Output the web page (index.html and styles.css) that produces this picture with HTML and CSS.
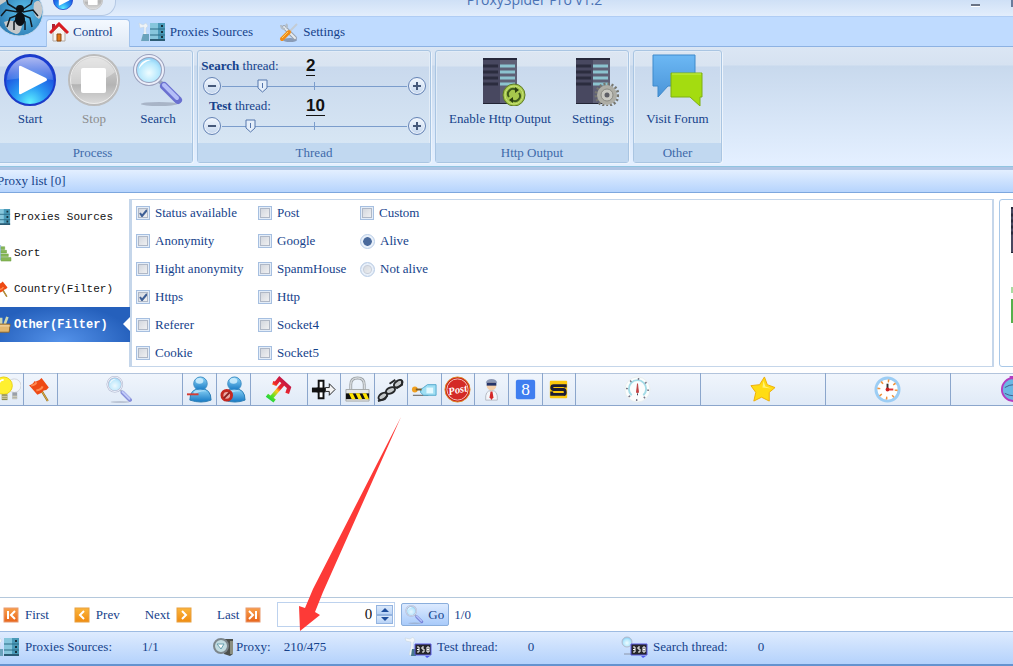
FILE: index.html
```html
<!DOCTYPE html>
<html lang="en">
<head>
    <meta charset="UTF-8">
    <meta name="viewport" content="width=device-width, initial-scale=1.0">
    <title>ProxySpider Pro v1.2</title>
    <link rel="stylesheet" href="styles.css">
</head>
<body>
    <!-- shared icons -->
    <svg class="sprite" aria-hidden="true">
        <defs>
            <radialGradient id="g-play" cx=".5" cy=".95" r=".9"><stop offset="0" stop-color="#5ff0ff"/><stop offset=".35" stop-color="#2a9cf4"/><stop offset=".75" stop-color="#1b50e0"/><stop offset="1" stop-color="#1a3cd8"/></radialGradient>
            <linearGradient id="g-shine" x1="0" y1="0" x2="0" y2="1"><stop offset="0" stop-color="#fff" stop-opacity=".65"/><stop offset="1" stop-color="#fff" stop-opacity=".15"/></linearGradient>
            <linearGradient id="g-stop" x1="0" y1="0" x2="0" y2="1"><stop offset="0" stop-color="#dcdcdc"/><stop offset=".6" stop-color="#b4b4b4"/><stop offset="1" stop-color="#dedede"/></linearGradient>
            <radialGradient id="g-lens" cx=".5" cy=".6" r=".6"><stop offset="0" stop-color="#effcff"/><stop offset=".6" stop-color="#b6e8fd"/><stop offset="1" stop-color="#7cc6f2"/></radialGradient>
            <linearGradient id="g-user" x1="0" y1="0" x2="0" y2="1"><stop offset="0" stop-color="#8fd6f8"/><stop offset="1" stop-color="#1478c4"/></linearGradient>
            <linearGradient id="g-orange" x1="0" y1="0" x2="0" y2="1"><stop offset="0" stop-color="#f9a04a"/><stop offset="1" stop-color="#e8641a"/></linearGradient>
            <linearGradient id="g-amber" x1="0" y1="0" x2="0" y2="1"><stop offset="0" stop-color="#fbb53c"/><stop offset="1" stop-color="#f08c10"/></linearGradient>
            <linearGradient id="g-rainbow" gradientUnits="userSpaceOnUse" x1="4" y1="26" x2="22" y2="6"><stop offset="0" stop-color="#10d048"/><stop offset=".25" stop-color="#5ee020"/><stop offset=".5" stop-color="#ffc820"/><stop offset=".65" stop-color="#f02828"/><stop offset="1" stop-color="#c01848"/></linearGradient>
            <linearGradient id="g-chat" x1="0" y1="0" x2="0" y2="1"><stop offset="0" stop-color="#6cb8f4"/><stop offset="1" stop-color="#4a94d8"/></linearGradient>
            <radialGradient id="g-globe" cx=".6" cy=".5" r=".6"><stop offset="0" stop-color="#5cc0ec"/><stop offset="1" stop-color="#2a78b0"/></radialGradient>
        </defs>
        <symbol id="i-play" viewBox="0 0 52 52">
            <circle cx="26" cy="26" r="25" fill="url(#g-play)" stroke="#1c3cc8" stroke-width="2"/>
            <path d="M3 26a23 23 0 0 1 46 0q-22-4-46 0z" fill="url(#g-shine)"/>
            <path d="M15 13q0-2 2-1l25 12q2 2 0 3L17 40q-2 1-2-1z" fill="#fff"/>
        </symbol>
        <symbol id="i-stop" viewBox="0 0 52 52">
            <circle cx="26" cy="26" r="25" fill="url(#g-stop)" stroke="#bcbcbc" stroke-width="2"/>
            <path d="M3 30A23 23 0 0 1 47 18Q30 32 3 30z" fill="#fff" opacity=".35"/>
            <circle cx="26" cy="26" r="23.500" fill="none" stroke="#ececec"/>
            <rect x="13" y="14" width="25" height="25" rx="2" fill="#fff"/>
        </symbol>
        <symbol id="i-search" viewBox="0 0 52 52">
            <ellipse cx="27" cy="50" rx="18" ry="2" fill="#8d97ab" opacity=".6"/>
            <path d="M27 27l6 5" stroke="#9aa4bc" stroke-width="4"/>
            <path d="M32 32L46 46" stroke="#6a70d0" stroke-width="8" stroke-linecap="round"/>
            <path d="M32 31L45 44" stroke="#b4bef8" stroke-width="4" stroke-linecap="round"/>
            <circle cx="17" cy="16" r="14" fill="url(#g-lens)" stroke="#9aa0bc" stroke-width="4"/>
            <circle cx="17" cy="16" r="14" fill="none" stroke="#eceffa" stroke-width="2"/>
            <path d="M7 15a10 10 0 0 1 12-9q-8 2-12 9z" fill="#fff"/>
        </symbol>
        <symbol id="i-server" viewBox="0 0 52 52">
            <path d="M9 4h17v46H9z" fill="#484860"/><path d="M26 4h17v46H26z" fill="#5f6076"/>
            <path d="M9 4h34v2H9z" fill="#26283a"/><path d="M9 49h34v1H9z" fill="#222434"/>
            <path d="M9 12h15M9 18h15M9 24h15M9 30h15" stroke="#2b2c3e" stroke-width="3"/>
            <path d="M26 12h15M26 18h15M26 24h15M26 30h15" stroke="#8cc3cf" stroke-width="3"/>
        </symbol>
        <symbol id="i-servers" viewBox="0 0 28 20">
            <path d="M1 1l4 2 3-2 2 3-2 2v4l3 9H3l3-9V5L2 6z" fill="#eef3f7" stroke="#c4d2dc" stroke-width=".5"/>
            <path d="M5 12h6v7H3z" fill="#6aa2bc"/>
            <path d="M12 1h15v18H12z" fill="#4a9ab8"/><path d="M12 1h8v18h-8z" fill="#86c6dc"/>
            <path d="M12 7h15M12 13h15" stroke="#2c6c86" stroke-width="1"/><path d="M12 18h15" stroke="#2c5c74" stroke-width="2"/>
            <path d="M23 4h2M23 10h2M23 15h2" stroke="#16323e" stroke-width="2"/>
        </symbol>
        <symbol id="i-house" viewBox="0 0 20 20">
            <path d="M4 10l6-6 6 6v9H4z" fill="#f8f4f0" stroke="#b5a9a0"/>
            <path d="M3 2h3v4l-3 3z" fill="#a23"/>
            <path d="M1 11l9-9 9 9" fill="none" stroke="#da1c22" stroke-width="3"/>
            <path d="M8 12h4v7H8z" fill="#e07818" stroke="#8c4a10"/>
        </symbol>
        <symbol id="i-tools" viewBox="0 0 20 20">
            <ellipse cx="11" cy="18" rx="7" ry="2" fill="#667086" opacity=".6"/>
            <path d="M5 5l11 11" stroke="#98a2b0" stroke-width="4" stroke-linecap="round"/>
            <path d="M5 5l11 11" stroke="#e8ecf0" stroke-width="2" stroke-linecap="round"/>
            <path d="M2 3q0 4 4 4M7 2q2 2 0 4" fill="none" stroke="#b4bec8" stroke-width="2"/>
            <path d="M9 11l9-9" stroke="#c4ccd4" stroke-width="2"/>
            <path d="M3 17l7-7" stroke="#f08c18" stroke-width="4" stroke-linecap="round"/><path d="M3 16l6-6" stroke="#ffd060"/>
        </symbol>
        <symbol id="i-flag" viewBox="0 0 26 26">
            <path d="M9 6l11 18" stroke="#8e681c" stroke-width="2"/><path d="M9 6l11 18" stroke="#d8ac48"/>
            <path d="M2 9q4-1 5-4 4 1 7-3l7 9q-2 3-5 3-2 3-6 4z" fill="#ee4a14"/><path d="M4 9q4 0 5-3M9 14q5-1 6-4" stroke="#ff8a50" fill="none" stroke-width="2"/>
        </symbol>
        <symbol id="i-user" viewBox="0 0 28 28">
            <path d="M4 25q0-12 11-12t11 12q-10 4-22 0z" fill="url(#g-user)" stroke="#2b7db4"/>
            <circle cx="15" cy="8" r="7" fill="url(#g-user)" stroke="#3b8dc4"/><ellipse cx="14" cy="5" rx="4" ry="3" fill="#d8f3ff" opacity=".8"/>
            <path d="M8 16q7-4 13 0-7-1-13 4z" fill="#c5ebff" opacity=".7"/>
        </symbol>
        <symbol id="i-counter" viewBox="0 0 28 22">
            <path d="M11 8h16v11H11z" fill="#26262a" stroke="#5a5ae0"/>
            <path d="M13 11h2v5h-2M13 13.500h2M20 11h-2v2h2v3h-2M23 11h2v5h-2zM23 13.500h2" fill="none" stroke="#fff"/>
            <path d="M21 20h5l-3 2z" fill="#5058f0"/>
        </symbol>
    </svg>

    <div class="app">
        <header class="titlebar">
            <div class="quick-access">
                <button class="quick" aria-label="Start"><svg><use href="#i-play"/></svg></button>
                <button class="quick" aria-label="Stop"><svg><use href="#i-stop"/></svg></button>
            </div>
            <h1>ProxySpider Pro v1.2</h1>
            <div class="window-buttons">
                <button aria-label="Minimize"><svg viewBox="0 0 10 8"><path d="M0 4h9v2H0z" fill="#6a7486"/><path d="M0 6h9v1H0z" fill="#fff"/></svg></button>
                <button aria-label="Maximize"><svg viewBox="0 0 10 8"><path d="M1 0v6h8V0" fill="none" stroke="#6a7c9c" stroke-width="2"/></svg></button>
            </div>
            <svg class="orb" viewBox="0 0 50 50">
                <circle cx="25" cy="25" r="24" fill="url(#g-globe)" stroke="#c5d9ee"/>
                <path d="M10 35q8-3 13 1 7 1 4 6-1 5-5 5Q12 44 10 35zM40 16q6-6 8 4 1 9-3 12-7-3-5-16zM4 14q8-10 14-9l-4 8-8 5z" fill="#c6c9ca"/>
                <g fill="none" stroke="#111a22" stroke-width="1.500"><path d="M24 23L14 17l-2-7M24 25l-12-2-5 6M24 28l-8 3-3 9M25 30l-5 5v8M28 23l9-6 2-7M29 25l10-2 5 6M29 28l7 3 2 9M28 30l3 5v8"/></g>
                <ellipse cx="26" cy="32" rx="5" ry="7" fill="#0b1015"/><circle cx="26" cy="22" r="4" fill="#0b1015"/>
            </svg>
        </header>

        <nav class="tabs">
            <a href="#" class="tab active"><svg class="tab-icon"><use href="#i-house"/></svg>Control</a>
            <a href="#" class="tab"><svg class="tab-icon wide"><use href="#i-servers"/></svg>Proxies Sources</a>
            <a href="#" class="tab"><svg class="tab-icon"><use href="#i-tools"/></svg>Settings</a>
        </nav>

        <div class="ribbon">
            <section class="group process">
                <div class="group-body">
                    <button class="tile"><svg><use href="#i-play"/></svg>Start</button>
                    <button class="tile" disabled><svg><use href="#i-stop"/></svg>Stop</button>
                    <button class="tile"><svg><use href="#i-search"/></svg>Search</button>
                </div>
                <h2>Process</h2>
            </section>
            <section class="group thread">
                <div class="group-body">
                    <div class="thread-head"><label for="search-thread"><b>Search</b> thread:</label><output>2</output></div>
                    <div class="slider">
                        <button aria-label="Less"><svg viewBox="0 0 16 16"><path d="M4 8h8" stroke="#46597a" stroke-width="2"/></svg></button>
                        <input type="range" id="search-thread" min="0" max="100" value="20">
                        <button aria-label="More"><svg viewBox="0 0 16 16"><path d="M4 8h8M8 4v8" stroke="#46597a" stroke-width="2"/></svg></button>
                    </div>
                    <div class="thread-head"><label for="test-thread"><b>Test</b> thread:</label><output>10</output></div>
                    <div class="slider">
                        <button aria-label="Less"><svg viewBox="0 0 16 16"><path d="M4 8h8" stroke="#46597a" stroke-width="2"/></svg></button>
                        <input type="range" id="test-thread" min="0" max="100" value="13">
                        <button aria-label="More"><svg viewBox="0 0 16 16"><path d="M4 8h8M8 4v8" stroke="#46597a" stroke-width="2"/></svg></button>
                    </div>
                </div>
                <h2>Thread</h2>
            </section>
            <section class="group output">
                <div class="group-body">
                    <button class="tile tile-wide"><svg viewBox="0 0 52 52"><use href="#i-server"/><circle cx="40" cy="41" r="11" fill="#a6c84c" stroke="#5e7a26"/><circle cx="40" cy="41" r="9" fill="none" stroke="#c8e078"/><path d="M35 43a5 5 0 0 1 7-7M45 39a5 5 0 0 1-7 7" fill="none" stroke="#3f5a1c" stroke-width="2"/><path d="M41 33l4 3-4 3zM39 49l-4-3 4-3z" fill="#2c4010"/></svg>Enable Http Output</button>
                    <button class="tile"><svg viewBox="0 0 52 52"><use href="#i-server"/><circle cx="40" cy="41" r="11" fill="none" stroke="#77776f" stroke-width="3" stroke-dasharray="2 2"/><circle cx="40" cy="41" r="10" fill="#aeaea6"/><circle cx="40" cy="41" r="6" fill="#c9c9c2" stroke="#8b8b84"/><circle cx="40" cy="41" r="2.500" fill="#5e5f66"/></svg>Settings</button>
                </div>
                <h2>Http Output</h2>
            </section>
            <section class="group other">
                <div class="group-body">
                    <button class="tile"><svg viewBox="0 0 52 52"><path d="M1 1h42v31H16L6 43V32H1z" fill="url(#g-chat)" stroke="#3f8acb"/><path d="M19 19h31v24h-2v9l-10-9H19z" fill="#a4dc10" stroke="#7eb012"/><path d="M20 20h29" stroke="#c6f04c"/></svg>Visit Forum</button>
                </div>
                <h2>Other</h2>
            </section>
        </div>

        <h2 class="list-title">Proxy list [0]</h2>

        <div class="filters">
            <nav class="filter-menu">
                <a href="#"><svg viewBox="8 0 20 20"><use href="#i-servers" width="28" height="20"/></svg>Proxies Sources</a>
                <a href="#"><svg viewBox="0 0 20 20"><path d="M4 3l5-2v17H4z" fill="#9cc4dc"/><path d="M9 3h4v3H9zM9 7h6v3H9zM9 11h8v3H9zM9 15h11v4H9z" fill="#86b854" stroke="#64983a" stroke-width=".5"/></svg>Sort</a>
                <a href="#"><svg><use href="#i-flag"/></svg>Country(Filter)</a>
                <a href="#" class="active"><svg viewBox="0 0 20 20"><path d="M4 9l2-8M9 9V2M13 9l3-8" stroke="#cdd6b0" stroke-width="3"/><path d="M1 9h18l-1 9H2z" fill="#e2b870" stroke="#8c6428"/><path d="M1 11h18" stroke="#f6deb0"/></svg>Other(Filter)</a>
            </nav>
            <form class="options">
                <label><input type="checkbox" checked>Status available</label>
                <label><input type="checkbox">Anonymity</label>
                <label><input type="checkbox">Hight anonymity</label>
                <label><input type="checkbox" checked>Https</label>
                <label><input type="checkbox">Referer</label>
                <label><input type="checkbox">Cookie</label>
                <label><input type="checkbox">Post</label>
                <label><input type="checkbox">Google</label>
                <label><input type="checkbox">SpanmHouse</label>
                <label><input type="checkbox">Http</label>
                <label><input type="checkbox">Socket4</label>
                <label><input type="checkbox">Socket5</label>
                <label><input type="checkbox">Custom</label>
                <label><input type="radio" name="alive" checked>Alive</label>
                <label><input type="radio" name="alive">Not alive</label>
            </form>
            <aside class="side-panel">
                <svg viewBox="0 0 52 52"><use href="#i-server"/></svg>
                <svg viewBox="0 0 52 52"><path d="M9 22h34v24H9z" fill="#56b04c"/><path d="M9 10h4v6H9z" fill="#a8dca0"/></svg>
            </aside>
        </div>

        <div class="grid">
            <table>
                <colgroup>
                    <col class="c-first"><col class="c-icon"><col class="c-wide"><col class="c-icon"><col class="c-icon"><col class="c-type">
                    <col class="c-small"><col class="c-icon"><col class="c-small"><col class="c-icon"><col class="c-small"><col class="c-icon"><col class="c-icon"><col class="c-small">
                    <col class="c-wide"><col class="c-wide"><col class="c-wide"><col>
                </colgroup>
                <thead>
                    <tr>
                        <th><svg viewBox="0 0 28 28"><circle cx="21" cy="10" r="7" fill="#f4f6f8" stroke="#d0d4dc"/><path d="M19 17h5v7h-5z" fill="#9aa0a8"/><circle cx="10" cy="10" r="9" fill="#fff030" stroke="#e8d010"/><path d="M5 9a5 5 0 0 1 5-5" stroke="#fff" stroke-width="2" fill="none"/><path d="M8 19h6v6H8z" fill="#8c8a50"/><path d="M8 21h6M8 23h6M19 21h5M19 23h5" stroke="#e0dcc0"/></svg></th>
                        <th><svg><use href="#i-flag"/></svg></th>
                        <th><svg><use href="#i-search" opacity=".75"/></svg></th>
                        <th><svg viewBox="0 0 28 28"><use href="#i-user"/><path d="M1 19h12" stroke="#d43c34" stroke-width="2"/></svg></th>
                        <th><svg viewBox="0 0 28 28"><use href="#i-user"/><circle cx="7" cy="20" r="5" fill="#e8a8a4" stroke="#c42820" stroke-width="3"/><path d="M4 23l6-6" stroke="#8c2020" stroke-width="2"/></svg></th>
                        <th><svg viewBox="0 0 28 28"><path d="M2 20l8 6M6 23L19 8M8 7l3 1 4-5 10 9-2 6" fill="none" stroke="url(#g-rainbow)" stroke-width="4"/></svg></th>
                        <th><svg viewBox="0 0 28 28"><path d="M2 12h9v5H2z" fill="#111"/><path d="M9 5h5v18H9z" fill="#fff" stroke="#111" stroke-width="2"/><path d="M7 12h9v5H7z" fill="#111"/><path d="M16 12h4V8l6 6-6 6v-4h-4z" fill="#f4f4f4" stroke="#222"/></svg></th>
                        <th><svg viewBox="0 0 28 28"><path d="M7 15V9q0-7 7-7t7 7v6" fill="none" stroke="#9ea4a8" stroke-width="3"/><path d="M7 15V9q0-7 7-7t7 7v6" fill="none" stroke="#eef0f2" stroke-width="1"/><path d="M2 14h24v12H2z" fill="#e4e6e6" stroke="#a4a8a8"/><path d="M2 18h24v6H2z" fill="#111"/><path d="M5 18h4l3 6H8zM12 18h4l3 6h-4zM19 18h4l3 6h-4z" fill="#ffe400"/></svg></th>
                        <th><svg viewBox="0 0 28 28"><g fill="#c4c8ca" stroke="#26282a" stroke-width="2"><ellipse cx="6" cy="21" rx="5" ry="3" transform="rotate(-35 6 21)"/><ellipse cx="14" cy="15" rx="5" ry="3" transform="rotate(-25 14 15)"/><ellipse cx="22" cy="8" rx="5" ry="3" transform="rotate(-35 22 8)"/></g><path d="M1 26l7-2 3-4M13 8l6-4M20 13l6-4V5" stroke="#26282a" stroke-width="2" fill="none"/></svg></th>
                        <th><svg viewBox="0 0 28 28"><path d="M2 20h16" stroke="#555" stroke-width="1"/><path d="M13 12l4-3h9v11H13l-3-3v-3z" fill="#9fdff4" stroke="#52a8cc"/><path d="M16 12h7v6h-7z" fill="#e4f9ff"/><circle cx="4" cy="14" r="3" fill="#f0a020"/><path d="M5 14h6" stroke="#7c5c28" stroke-width="2"/></svg></th>
                        <th><svg viewBox="0 0 28 28"><circle cx="14" cy="14" r="13" fill="#c81c1c" stroke="#e08820"/><circle cx="14" cy="14" r="11" fill="#d42a26" stroke="#f8c8b8" stroke-width="1"/><text x="14" y="18" class="post-text" transform="rotate(-12 14 14)">Post</text></svg></th>
                        <th><svg viewBox="0 0 28 28"><path d="M8 25q-1-10 6-10t6 10z" fill="#f4f6fa" stroke="#b4bac4"/><circle cx="14" cy="10" r="5" fill="#f5cfa8"/><path d="M8 7q1-4 6-4t6 4z" fill="#8c98b4"/><path d="M9 7h10v3H9z" fill="#253468"/><path d="M13 16h2l1 6-2 3-2-3z" fill="#d42828"/></svg></th>
                        <th><svg viewBox="0 0 28 28"><rect x="4" y="4" width="20" height="20" rx="2" fill="#3f7ef0"/><text x="14" y="20" class="g-text">8</text></svg></th>
                        <th><svg viewBox="0 0 28 28"><rect x="5" y="5" width="18" height="18" rx="1" fill="#fcc80c"/><path d="M21 12v-2H9q-2 0-2 2t2 2h10q2 0 2 3t-2 2H7v-3" fill="none" stroke="#1d1d34" stroke-width="3"/></svg></th>
                        <th><svg viewBox="0 0 28 28"><circle cx="14" cy="14" r="13" fill="#fbfdfd" stroke="#e8eeee"/><path d="M8 20A9 9 0 1 1 20 20" fill="none" stroke="#a4dbe6" stroke-width="2"/><circle cx="14" cy="14" r="11" fill="none" stroke="#778" stroke-width="2" stroke-dasharray="1.500 7.138"/><path d="M14 8l1 9h-2z" fill="#d43c40" stroke="#b44"/><path d="M14 18v2" stroke="#345"/></svg></th>
                        <th><svg viewBox="0 0 28 28"><path d="M16 1l3 8 8 3-6 5v9l-8-4-8 4 2-9-5-7 9-1z" fill="#ffdc14" stroke="#eeae08"/><path d="M15 5l2 6 6 2-9-1z" fill="#fff27a"/></svg></th>
                        <th><svg viewBox="0 0 28 28"><circle cx="14" cy="14" r="12" fill="#fff" stroke="#9ccdf4" stroke-width="3"/><circle cx="14" cy="14" r="9" fill="none" stroke="#f09038" stroke-width="3" stroke-dasharray="1.600 5.468"/><path d="M14 14V8" stroke="#333" stroke-width="2"/><path d="M14 14h6" stroke="#e03434" stroke-width="2"/><circle cx="14" cy="14" r="2" fill="#c22"/></svg></th>
                        <th><svg viewBox="0 0 28 28"><circle cx="14" cy="14" r="12" fill="#6bb8e4" stroke="#b43cc0" stroke-width="2"/><path d="M10 1h8M14 1v3" stroke="#b43cc0" stroke-width="2"/><path d="M5 12q9-6 18 0M5 18q9 5 18 0M14 4v20" stroke="#445c8c" fill="none"/></svg></th>
                    </tr>
                </thead>
            </table>
        </div>

        <div class="pager">
            <button class="page"><svg viewBox="0 0 16 16"><rect x="1" y="1" width="14" height="14" fill="url(#g-orange)" stroke="#e89a70"/><path d="M5 4v8M12 4L8 8l4 4" fill="none" stroke="#fff" stroke-width="2"/></svg>First</button>
            <button class="page"><svg viewBox="0 0 16 16"><rect x="1" y="1" width="14" height="14" fill="url(#g-amber)" stroke="#e8a040"/><path d="M10 4L6 8l4 4" fill="none" stroke="#fff" stroke-width="2"/></svg>Prev</button>
            <button class="page">Next<svg viewBox="0 0 16 16"><rect x="1" y="1" width="14" height="14" fill="url(#g-amber)" stroke="#e8a040"/><path d="M6 4l4 4-4 4" fill="none" stroke="#fff" stroke-width="2"/></svg></button>
            <button class="page">Last<svg viewBox="0 0 16 16"><rect x="1" y="1" width="14" height="14" fill="url(#g-orange)" stroke="#e89a70"/><path d="M4 4l4 4-4 4M11 4v8" fill="none" stroke="#fff" stroke-width="2"/></svg></button>
            <div class="spinner">
                <input type="text" value="0" aria-label="Page">
                <div class="spin-buttons">
                    <button aria-label="Up"><svg viewBox="0 0 8 4"><path d="M4 0l4 4H0z" fill="#1f4e9c"/></svg></button>
                    <button aria-label="Down"><svg viewBox="0 0 8 4"><path d="M0 0h8L4 4z" fill="#1f4e9c"/></svg></button>
                </div>
            </div>
            <button class="go"><svg><use href="#i-search" opacity=".8"/></svg>Go</button>
            <span>1/0</span>
        </div>

        <footer class="status">
            <div class="stat"><svg><use href="#i-servers"/></svg><span>Proxies Sources:</span><span>1/1</span></div>
            <div class="stat"><svg viewBox="0 0 28 22"><path d="M13 3h9v15l-3 2-6-2z" fill="#4c504c"/><path d="M19 5h3v13h-3z" fill="#8c8f80"/><circle cx="10" cy="10" r="7" fill="#c2dce2" stroke="#7c868c" stroke-width="2"/><path d="M6 8h7l-3 5z" fill="#fff" stroke="#68a0b0"/></svg><span>Proxy:</span><span>210/475</span></div>
            <div class="stat"><svg viewBox="0 0 28 22"><path d="M1 2l5 1 3-2 2 3-2 3v5l3 7H5l2-9V6L2 5z" fill="#f2f6fa" stroke="#c4d2dc" stroke-width=".5"/><path d="M8 13h4v7H7z" fill="#48788c"/><use href="#i-counter"/></svg><span>Test thread:</span><span>0</span></div>
            <div class="stat"><svg viewBox="0 0 28 22"><circle cx="7" cy="6" r="5" fill="url(#g-lens)" stroke="#b4bacb"/><path d="M4 18h8" stroke="#8d97ab" stroke-width="2" opacity=".5"/><use href="#i-counter"/></svg><span>Search thread:</span><span>0</span></div>
        </footer>
    </div>

    <svg class="pointer" viewBox="0 0 104 216" aria-hidden="true"><path d="M102 1L24 176l-8 20 5 3L1 215 0 190l6 2 8-19z" fill="#fd3a37"/></svg>
</body>
</html>
```
FILE: styles.css
```css
body {
    margin: 0;
    background-color: #fff;
    color: #15428b;
    font-family: "Liberation Serif", serif;
    font-size: 13px;
    line-height: 16px;
    overflow: hidden;
}
* {
    box-sizing: border-box;
}
button {
    font: inherit;
    color: inherit;
    background: none;
    border: 0;
    padding: 0;
}
a {
    color: inherit;
    text-decoration: none;
}
h1, h2 {
    margin: 0;
    font-size: 13px;
    font-weight: normal;
}
svg {
    display: block;
    flex: none;
}
.sprite {
    position: absolute;
    width: 0;
    height: 0;
}

/* the window is a little wider than the view */
.app {
    display: flex;
    flex-direction: column;
    min-height: 100vh;
    margin: 0 -64px 0 -8px;
}

/* title bar */
.titlebar {
    position: relative;
    display: grid;
    grid-template-columns: 1fr auto 1fr;
    align-items: end;
    height: 17px;
    background: linear-gradient(#cfe0f6, #e3eefc);
    border-bottom: 1px solid #b0cdf4;
}
.titlebar h1 {
    align-self: start;
    height: 16px;
    margin-top: -9px;
    font-family: "Open Sans", sans-serif;
    font-size: 14px;
    line-height: 18px;
    color: #4a72b4;
}
.quick-access {
    display: flex;
    align-items: flex-end;
    gap: 10px;
    width: 124px;
    height: 16px;
    padding: 0 12px 5px 61px;
    border: 1px solid #b4c8e4;
    border-width: 0 1px 1px 0;
    border-radius: 0 0 14px 0;
    background-color: #e0ebf9;
}
.quick svg {
    width: 20px;
    height: 20px;
}
.window-buttons {
    display: flex;
    justify-content: flex-end;
    align-self: start;
    gap: 30px;
    padding-right: 56px;
}
.window-buttons svg {
    width: 10px;
    height: 8px;
}
.orb {
    position: absolute;
    left: 2px;
    top: -13px;
    width: 50px;
    height: 50px;
}

/* tabs */
.tabs {
    display: flex;
    align-items: flex-end;
    height: 30px;
    padding-left: 54px;
    background-color: #bfdbff;
    border-bottom: 1px solid #8db2e3;
}
.tab {
    display: flex;
    align-items: center;
    gap: 4px;
    height: 27px;
    padding: 0 18px 2px 8px;
}
.tab.active {
    margin-bottom: -1px;
    height: 28px;
    padding: 0 16px 3px 2px;
    border: 1px solid #a4c4ec;
    border-bottom: 0;
    border-radius: 4px 4px 0 0;
    background: linear-gradient(#f4f9ff, #dfe9f5);
}
.tab-icon {
    width: 20px;
    height: 20px;
}
.tab-icon.wide {
    width: 28px;
}

/* ribbon */
.ribbon {
    display: flex;
    align-items: flex-start;
    gap: 4px;
    height: 120px;
    padding-top: 3px;
    background: linear-gradient(#dbe6f4 0, #d6e2f1 18px, #c8d9ed 19px, #e3efff 114px);
    border-bottom: 1px solid #90c4e0;
}
.group {
    display: flex;
    flex-direction: column;
    height: 113px;
    border: 1px solid #a9c5e2;
    border-radius: 3px;
    box-shadow: inset 0 0 0 1px #e2ecf7, 1px 1px 0 #edf4fc;
    background: linear-gradient(#dce6f2 0, #d9e4f1 15px, #c9d9ed 16px, #d7e6f4 93px);
}
.group-body {
    flex: 1;
    display: flex;
    padding-top: 3px;
}
.group h2 {
    height: 19px;
    line-height: 20px;
    text-align: center;
    color: #3e6aaa;
    background-color: #c1d8f0;
}
.process {
    width: 201px;
}
.process .group-body {
    padding-left: 5px;
}
.thread {
    width: 234px;
}
.output {
    width: 194px;
}
.output .group-body {
    padding-left: 7px;
    gap: 4px;
}
.other {
    width: 89px;
}
.other .group-body {
    justify-content: center;
}
.tile {
    display: flex;
    flex-direction: column;
    align-items: center;
    gap: 5px;
    width: 64px;
    height: 76px;
    white-space: nowrap;
}
.tile-wide {
    width: 114px;
}
.tile svg {
    width: 52px;
    height: 52px;
}
.tile:disabled {
    color: #8d8d8d;
}
.thread .group-body {
    flex-direction: column;
    padding-top: 4px;
}
.thread-head {
    display: flex;
    align-items: center;
    height: 22px;
    padding-left: 2px;
}
.thread-head label {
    width: 80px;
    text-align: center;
}
.thread-head output {
    margin-left: 26px;
    border-bottom: 1px solid #111;
    font: bold 17px/18px "Liberation Sans", sans-serif;
    color: #111;
}
.slider {
    display: flex;
    align-items: center;
    gap: 1px;
    height: 18px;
    padding: 0 4px 0 5px;
}
.slider button {
    width: 18px;
    height: 18px;
    border: 1px solid #6482b4;
    border-radius: 50%;
    background: linear-gradient(#f2f7fd, #c4d6ee);
    box-shadow: inset 0 0 0 1px #eef4fc;
}
.slider button svg {
    width: 16px;
    height: 16px;
}
.slider input {
    flex: 1;
    min-width: 0;
    height: 16px;
    margin: 0;
    appearance: none;
    background:
        linear-gradient(#7b9dcc, #7b9dcc) center / 100% 1px no-repeat,
        linear-gradient(#7b9dcc, #7b9dcc) center / 1px 8px no-repeat;
}
.slider input::-webkit-slider-thumb {
    appearance: none;
    width: 11px;
    height: 14px;
    background: url("data:image/svg+xml,%3Csvg xmlns='http://www.w3.org/2000/svg' viewBox='0 0 11 14'%3E%3Cpath d='M1 1h9v8l-4.500 4L1 9z' fill='%23e4eefa' stroke='%235576ac'/%3E%3Cpath d='M5.500 4v5' stroke='%235576ac'/%3E%3C/svg%3E");
}

/* list title */
.list-title {
    height: 26px;
    padding: 3px 0 0 5px;
    border-top: 3px solid #aec4e4;
    border-bottom: 1px solid #7da7de;
    background: linear-gradient(#e3efff, #b6d4fd);
}

/* filters */
.filters {
    display: flex;
    height: 180px;
    padding: 5px 0;
}
.filter-menu {
    width: 138px;
    margin-right: -1px;
    padding-top: 1px;
    color: #111;
    font-family: "Liberation Mono", monospace;
    font-size: 11px;
}
.filter-menu a {
    display: flex;
    align-items: center;
    height: 36px;
    gap: 2px;
    white-space: nowrap;
}
.filter-menu svg {
    width: 20px;
    height: 18px;
}
.filter-menu .active {
    position: relative;
    height: 35px;
    color: #fff;
    font-size: 12px;
    font-weight: bold;
    background: radial-gradient(ellipse at 50% 100%, #5593ea, #2560bc 75%);
}
.filter-menu .active::after {
    content: "";
    position: absolute;
    right: 0;
    top: 10px;
    border: 7px solid transparent;
    border-left: 0;
    border-right-color: #fff;
}
.options {
    flex: 1;
    display: grid;
    grid-auto-flow: column;
    grid-template-rows: repeat(6, 20px);
    grid-template-columns: 122px 102px auto;
    justify-content: start;
    row-gap: 8px;
    height: 168px;
    margin-top: 1px;
    padding: 3px 4px;
    border: 1px solid #c5d6ea;
    border-width: 1px 2px 1px 3px;
}
.options label {
    display: flex;
    align-items: center;
    gap: 5px;
    white-space: nowrap;
}
.options input {
    flex: none;
    appearance: none;
    width: 14px;
    height: 14px;
    margin: 0;
    border: 1px solid #a6bfe0;
    background: linear-gradient(135deg, #cdd2da, #f6f6f6);
    box-shadow: inset 0 0 0 1px #e4edf8, inset 0 0 0 2px #b0b8c6;
}
.options input[type="checkbox"]:checked {
    background: url("data:image/svg+xml,%3Csvg xmlns='http://www.w3.org/2000/svg' viewBox='0 0 12 12'%3E%3Cpath d='M3 6l2 3 5-6' fill='none' stroke='%233e5f96' stroke-width='2'/%3E%3C/svg%3E"), linear-gradient(135deg, #cdd2da, #f6f6f6);
}
.options input[type="radio"] {
    width: 15px;
    height: 15px;
    border-color: #b8cde8;
    border-radius: 50%;
    box-shadow: inset 0 0 0 2px #e8f0fa, inset 0 0 0 3px #c8ced8;
}
.options input[type="radio"]:checked {
    background: radial-gradient(circle, #4a6a9c 4px, #e9eef5 5px);
    box-shadow: inset 0 0 0 2px #e8f0fa;
}
.side-panel {
    display: flex;
    flex-direction: column;
    gap: 22px;
    width: 78px;
    height: 168px;
    margin: 1px 0 0 5px;
    padding: 3px 2px;
    border: 1px solid #a9c8e8;
    border-radius: 3px;
}
.side-panel svg {
    width: 52px;
    height: 52px;
}

/* proxy grid */
.grid {
    flex: 1;
    border-bottom: 1px solid #b4c8dc;
}
table {
    width: 100%;
    table-layout: fixed;
    border-collapse: collapse;
}
thead {
    background: linear-gradient(#f0f5fc, #e0eaf7);
}
th {
    height: 32px;
    padding: 0;
    border: 1px solid #8ba6cc;
    border-top-color: #b2c4dc;
    border-left: 0;
}
th svg {
    width: 27px;
    height: 27px;
    margin: 0 auto;
}
.c-first {
    width: 31px;
}
.c-icon {
    width: 34px;
}
.c-small {
    width: 33px;
}
.c-type {
    width: 57px;
}
.c-wide {
    width: 125px;
}
.post-text {
    font: italic bold 11px "Liberation Serif", serif;
    fill: #fff;
    text-anchor: middle;
}
.g-text {
    font: 18px "Liberation Serif", serif;
    fill: #fff;
    text-anchor: middle;
}

/* pager */
.pager {
    display: flex;
    align-items: center;
    height: 33px;
    padding-left: 11px;
}
.page {
    display: flex;
    align-items: center;
    gap: 6px;
    margin-right: 25px;
}
.page svg {
    width: 16px;
    height: 16px;
}
.spinner {
    display: flex;
    width: 118px;
    height: 25px;
    margin: 0 6px 0 -9px;
    padding: 2px 1px;
    border: 1px solid #bdd2ee;
}
.spinner input {
    flex: 1;
    min-width: 0;
    padding: 0 4px;
    border: 0;
    font: 15px "Liberation Serif", serif;
    text-align: right;
    color: #111;
}
.spin-buttons {
    display: flex;
    flex-direction: column;
    width: 17px;
}
.spin-buttons button {
    flex: 1;
    display: flex;
    align-items: center;
    justify-content: center;
    border: 1px solid #94b4e0;
    background: linear-gradient(#dbe9fb, #b9d3f6);
}
.spin-buttons svg {
    width: 8px;
    height: 4px;
}
.go {
    display: flex;
    align-items: center;
    gap: 4px;
    width: 48px;
    height: 23px;
    margin-right: 5px;
    padding-left: 3px;
    border: 1px solid #8aaedc;
    border-radius: 2px;
    background: linear-gradient(#dceaff, #a9cbfa);
}
.go svg {
    width: 19px;
    height: 19px;
}

/* status bar */
.status {
    display: flex;
    align-items: center;
    height: 35px;
    padding-bottom: 2px;
    border-top: 1px solid #9dbbe2;
    border-bottom: 2px solid #6593cf;
    background: linear-gradient(#deebfe, #b4d2fc);
}
.stat {
    display: flex;
    align-items: center;
}
.stat:nth-child(1) {
    width: 219px;
}
.stat:nth-child(2) {
    width: 193px;
}
.stat:nth-child(3) {
    width: 216px;
}
.stat svg {
    width: 28px;
    height: 22px;
    margin-right: 5px;
}
.stat span + span {
    margin-left: 30px;
}
.stat:nth-child(2) svg {
    margin-right: -3px;
}
.stat:nth-child(2) span + span {
    margin-left: 13px;
}

/* arrow over the grid */
.pointer {
    position: absolute;
    left: 299px;
    top: 416px;
    width: 104px;
    height: 216px;
    pointer-events: none;
}
```
